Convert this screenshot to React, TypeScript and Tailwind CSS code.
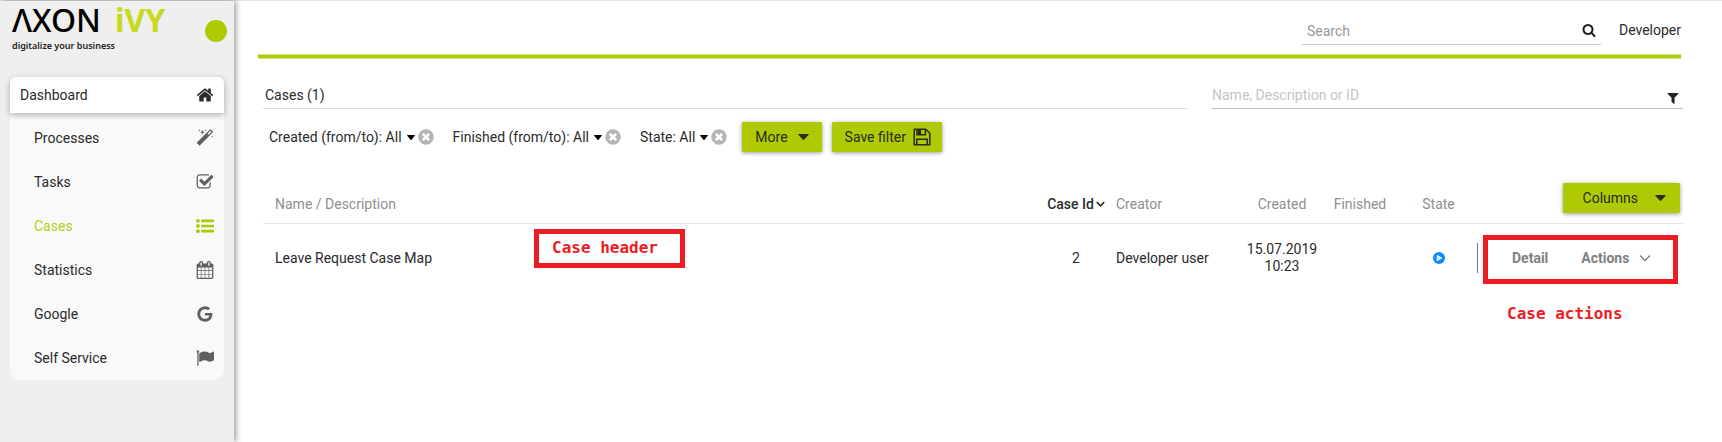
import React from "react";

type IconProps = { d: string; className?: string };

const Glyph = ({ d, className = "size-[18px]" }: IconProps) => (
  <svg viewBox="0 0 1792 1792" fill="currentColor" aria-hidden="true" className={className}>
    <path d={d} />
  </svg>
);

const HOME =
  "M1472 992v480q0 26-19 45t-45 19h-384v-384h-256v384h-384q-26 0-45-19t-19-45v-480q0-1 .5-3t.5-3l575-474 575 474q1 2 1 6zm223-69l-62 74q-8 9-21 11h-3q-13 0-21-7l-692-577-692 577q-12 8-24 7-13-2-21-11l-62-74q-8-10-7-23.5t11-21.5l719-599q32-26 76-26t76 26l244 204v-195q0-14 9-23t23-9h192q14 0 23 9t9 23v408l219 182q10 8 11 21.5t-7 23.5z";
const MAGIC =
  "M1254 581l293-293-107-107-293 293zm447-293q0 27-18 45l-1286 1286q-18 18-45 18t-45-18l-198-198q-18-18-18-45t18-45l1286-1286q18-18 45-18t45 18l198 198q18 18 18 45zm-1351-190l98 30-98 30-30 98-30-98-98-30 98-30 30-98zm350 162l196 60-196 60-60 196-60-196-196-60 196-60 60-196zm930 478l98 30-98 30-30 98-30-98-98-30 98-30 30-98zm-640-640l98 30-98 30-30 98-30-98-98-30 98-30 30-98z";
const CHECK =
  "M1472 930v318q0 119-84.5 203.5t-203.5 84.5h-832q-119 0-203.5-84.5t-84.5-203.5v-832q0-119 84.5-203.5t203.5-84.5h832q63 0 117 25 15 7 18 23 3 17-9 29l-49 49q-10 10-23 10-3 0-9-2-23-6-45-6h-832q-66 0-113 47t-47 113v832q0 66 47 113t113 47h832q66 0 113-47t47-113v-254q0-13 9-22l64-64q10-10 23-10 6 0 12 3 20 8 20 29zm231-489l-814 814q-24 24-57 24t-57-24l-430-430q-24-24-24-57t24-57l110-110q24-24 57-24t57 24l263 263 647-647q24-24 57-24t57 24l110 110q24 24 24 57t-24 57z";
const LIST =
  "M0 384a192 192 0 1 0 384 0a192 192 0 1 0-384 0zM0 896a192 192 0 1 0 384 0a192 192 0 1 0-384 0zM0 1408a192 192 0 1 0 384 0a192 192 0 1 0-384 0zM544 256h1216q32 0 32 32v192q0 32-32 32h-1216q-32 0-32-32v-192q0-32 32-32zM544 768h1216q32 0 32 32v192q0 32-32 32h-1216q-32 0-32-32v-192q0-32 32-32zM544 1280h1216q32 0 32 32v192q0 32-32 32h-1216q-32 0-32-32v-192q0-32 32-32z";
const CALENDAR =
  "M192 1664h288v-288h-288v288zm352 0h320v-288h-320v288zm-352-352h288v-320h-288v320zm352 0h320v-320h-320v320zm-352-384h288v-288h-288v288zm736 736h320v-288h-320v288zm-384-736h320v-288h-320v288zm768 736h288v-288h-288v288zm-384-352h320v-320h-320v320zm-352-864v-288q0-13-9.5-22.5t-22.5-9.5h-64q-13 0-22.5 9.5t-9.5 22.5v288q0 13 9.5 22.5t22.5 9.5h64q13 0 22.5-9.5t9.5-22.5zm736 864h288v-320h-288v320zm-384-384h320v-288h-320v288zm384 0h288v-288h-288v288zm32-480v-288q0-13-9.5-22.5t-22.5-9.5h-64q-13 0-22.5 9.5t-9.5 22.5v288q0 13 9.5 22.5t22.5 9.5h64q13 0 22.5-9.5t9.5-22.5zm384-64v1280q0 52-38 90t-90 38h-1408q-52 0-90-38t-38-90v-1280q0-52 38-90t90-38h128v-96q0-66 47-113t113-47h64q66 0 113 47t47 113v96h384v-96q0-66 47-113t113-47h64q66 0 113 47t47 113v96h128q52 0 90 38t38 90z";
const GOOGLE =
  "M896 786h725q12 67 12 128 0 217-91 387.5t-259.5 266.5-386.5 96q-157 0-299-60.5t-245-163.5-163.5-245-60.5-299 60.5-299 163.5-245 245-163.5 299-60.5q300 0 515 201l-209 201q-123-119-306-119-129 0-238.5 65t-173.5 176.5-64 243.5 64 243.5 173.5 176.5 238.5 65q87 0 160-24t120-60 82-82 51.5-87 22.5-78h-436v-264z";
const FLAG =
  "M320 256q0 72-64 110v1266q0 13-9.5 22.5t-22.5 9.5h-64q-13 0-22.5-9.5t-9.5-22.5v-1266q-64-38-64-110 0-53 37.5-90.5t90.5-37.5 90.5 37.5 37.5 90.5zm1472 64v763q0 25-12.5 38.5t-39.5 27.5q-215 116-369 116-61 0-123.5-22t-108.5-48-115.5-48-142.5-22q-192 0-464 146-17 9-33 9-26 0-45-19t-19-45v-742q0-32 31-55 21-14 79-43 236-120 421-120 107 0 200 29t219 88q38 19 88 19 54 0 117.5-21t110-47 88-47 54.5-21q26 0 45 19t19 45z";
const SEARCH =
  "M1216 832q0-185-131.5-316.5t-316.5-131.5-316.5 131.5-131.5 316.5 131.5 316.5 316.5 131.5 316.5-131.5 131.5-316.5zm512 832q0 52-38 90t-90 38q-54 0-90-38l-343-342q-179 124-399 124-143 0-273.5-55.5t-225-150-150-225-55.5-273.5 55.5-273.5 150-225 225-150 273.5-55.5 273.5 55.5 225 150 150 225 55.5 273.5q0 220-124 399l343 343q37 37 37 90z";
const FILTER =
  "M1595 295q17 41-14 70l-493 493v742q0 42-39 59-13 5-25 5-27 0-45-19l-256-256q-19-19-19-45v-486l-493-493q-31-29-14-70 17-39 59-39h1280q42 0 59 39z";
const TIMES =
  "M1277 1122q0-26-19-45l-181-181 181-181q19-19 19-45 0-27-19-46l-90-90q-19-19-46-19-26 0-45 19l-181 181-181-181q-19-19-45-19-27 0-46 19l-90 90q-19 19-19 46 0 26 19 45l181 181-181 181q-19 19-19 45 0 27 19 46l90 90q19 19 46 19 26 0 45-19l181-181 181 181q19 19 45 19 27 0 46-19l90-90q19-19 19-46zm387-226q0 209-103 385.5t-279.5 279.5-385.5 103-385.5-103-279.5-279.5-103-385.5 103-385.5 279.5-279.5 385.5-103 385.5 103 279.5 279.5 103 385.5z";

const Caret = ({ className }: { className: string }) => (
  <svg viewBox="0 0 12 7" preserveAspectRatio="none" fill="currentColor" aria-hidden="true" className={className}>
    <path d="M.8 0h10.4q1 0 .4.9L6.8 6.5q-.8.8-1.6 0L.4.9Q-.2 0 .8 0z" />
  </svg>
);

const Chevron = ({ className, strokeWidth }: { className: string; strokeWidth: number }) => (
  <svg viewBox="0 0 12 8" fill="none" stroke="currentColor" strokeWidth={strokeWidth} aria-hidden="true" className={className}>
    <path d="M1 1.5l5 5 5-5" />
  </svg>
);

const Floppy = () => (
  <svg viewBox="0 0 18 18" fill="none" stroke="currentColor" strokeWidth="1.5" aria-hidden="true" className="size-[18px]">
    <path d="M1.2 1.2h11.6l4 4v11.6H1.2z" strokeLinejoin="round" />
    <path d="M4 1.2v5.6h8.4V1.2" />
    <path d="M4.5 1.4h3.6v5H4.5z" fill="currentColor" stroke="none" />
    <path d="M3.8 16.6v-5.4h10.4v5.4" />
  </svg>
);

const menu = [
  { label: "Processes", icon: MAGIC },
  { label: "Tasks", icon: CHECK },
  { label: "Cases", icon: LIST, active: true },
  { label: "Statistics", icon: CALENDAR },
  { label: "Google", icon: GOOGLE },
  { label: "Self Service", icon: FLAG },
];

const filters = ["Created (from/to): All", "Finished (from/to): All", "State: All"];

const greenButton =
  "flex h-[30px] items-center rounded-[1px] bg-[#afca05] text-[#2b2b1e] shadow-[0_1px_4px_rgba(0,0,0,0.4)]";

function Sidebar() {
  return (
    <aside className="relative z-10 w-[234px] shrink-0 bg-[#efefef] px-[10px] shadow-[2px_0_6px_rgba(0,0,0,0.4)]">
      <div className="h-[76px] pl-[2px] font-['Noto_Sans']">
        <div className="flex gap-[14px] text-[32px] leading-[38px] text-black">
          <span className="font-medium">ΛXON</span>
          <span className="font-bold text-[#c8d91e]">iVY</span>
        </div>
        <div className="text-[9px] leading-[13px] font-semibold text-[#222]">digitalize your business</div>
      </div>
      <span className="absolute top-[19px] right-[7px] size-[22px] rounded-full bg-[#afca05]" />
      <nav className="rounded-[10px] bg-[#f9f9f9]">
        <a
          href="#dashboard"
          className="mb-[3px] flex h-9 items-center justify-between rounded-t-md bg-white pr-[10px] pl-[10px] text-[#2b2b2b] shadow-[0_2px_6px_rgba(0,0,0,0.3)]"
        >
          Dashboard
          <Glyph d={HOME} />
        </a>
        <ul>
          {menu.map((m) => (
            <li key={m.label}>
              <a
                href="#menu"
                className={
                  "flex h-11 items-center justify-between pr-[10px] pl-6 " +
                  (m.active ? "text-[#b5cf1c]" : "text-[#2b2b2b]")
                }
              >
                {m.label}
                <span className={m.active ? "text-[#afca05]" : "text-[#5f5f5f]"}>
                  <Glyph d={m.icon} />
                </span>
              </a>
            </li>
          ))}
        </ul>
      </nav>
    </aside>
  );
}

function Annotation({ children }: { children: string }) {
  return (
    <span className="font-['DejaVu_Sans_Mono'] text-base leading-5 font-bold whitespace-nowrap text-[#ed1c24]">
      {children}
    </span>
  );
}

function CaseTable() {
  return (
    <table className="w-full table-fixed border-collapse">
      <colgroup>
        <col />
        <col className="w-[72px]" />
        <col className="w-[132px]" />
        <col className="w-[76px]" />
        <col className="w-[80px]" />
        <col className="w-[77px]" />
        <col className="w-[206px]" />
      </colgroup>
      <thead>
        <tr className="h-[53px] border-b border-[#e6e6e6] text-[#8f8f8f] *:pt-[15px] *:font-normal">
          <th className="pl-3 text-left">Name / Description</th>
          <th className="whitespace-nowrap text-[#2b2b2b]">
            <button type="button" className="inline-flex items-center gap-[2px] font-medium">
              Case Id
              <Chevron className="h-[6px] w-[9px]" strokeWidth={2} />
            </button>
          </th>
          <th className="pl-1 text-left">Creator</th>
          <th>Created</th>
          <th>Finished</th>
          <th>State</th>
          <th className="!pt-[13px] pr-[3px] pb-[9px]">
            <button type="button" className={greenButton + " ml-auto gap-[17px] pr-[14px] pl-5"}>
              Columns
              <Caret className="h-[6px] w-[11px]" />
            </button>
          </th>
        </tr>
      </thead>
      <tbody>
        <tr className="h-[69px] text-center text-[#2b2b2b]">
          <td className="relative pl-3 text-left">
            Leave Request Case Map
            <div className="absolute top-[5px] left-[271px] flex h-[39px] w-[151px] items-center border-[5px] border-[#ed1c24] pl-[13px]">
              <Annotation>Case header</Annotation>
            </div>
          </td>
          <td>2</td>
          <td className="pl-1 text-left">Developer user</td>
          <td className="leading-[17px]">
            15.07.2019
            <br />
            10:23
          </td>
          <td />
          <td>
            <svg viewBox="0 0 12 12" role="img" aria-label="Running" className="mx-auto size-3">
              <circle cx="6" cy="6" r="6" fill="#0d8bff" />
              <path d="M4.2 3.4L8.8 6L4.2 8.6z" fill="#fff" stroke="#fff" strokeWidth=".9" strokeLinejoin="round" />
              <path d="M5.2 5.3L6.4 6L5.2 6.7z" fill="#0d8bff" />
            </svg>
          </td>
          <td className="relative">
            <div className="flex h-[30px] items-center border-l border-[#777] pl-[34px] text-[#808080]">
              <button type="button" className="font-bold">Detail</button>
              <button type="button" className="ml-[33px] flex items-center gap-[10px] font-bold">
                Actions
                <Chevron className="h-2 w-3" strokeWidth={1.4} />
              </button>
            </div>
            <div className="pointer-events-none absolute top-[11px] left-[6px] h-[49px] w-[195px] border-[5px] border-[#ed1c24]" />
            <div className="absolute top-20 left-[30px] flex">
              <Annotation>Case actions</Annotation>
            </div>
          </td>
        </tr>
      </tbody>
    </table>
  );
}

export default function App() {
  return (
    <div className="flex min-h-screen border-t border-[#e4e4e4] bg-white font-[Roboto,sans-serif] text-sm leading-5">
      <Sidebar />
      <main className="min-w-0 flex-1 pr-[39px] pl-6">
        <header className="mr-[2px] flex h-[53px] items-start justify-end gap-[18px] pt-[19px]">
          <div className="flex h-[25px] w-[299px] items-start border-b border-[#c8c8c8] px-[5px]">
            <input
              aria-label="Search"
              placeholder="Search"
              className="min-w-0 flex-1 pt-px leading-5 outline-none placeholder:text-[#999]"
            />
            <button type="button" aria-label="Run search" className="pt-[3px] text-[#222]">
              <Glyph d={SEARCH} className="size-[14px]" />
            </button>
          </div>
          <a href="#user" className="text-[#2b2b2b]">Developer</a>
        </header>
        <div className="mr-[2px] h-[5px] border-y border-[#d7e482] bg-[#afca05]" />

        <section className="pl-[5px]">
          <div className="flex gap-[25px] pt-[26px]">
            <h1 className="h-6 flex-1 border-b border-[#e0e0e0] pl-[2px] text-[#2b2b2b]">Cases (1)</h1>
            <div className="flex h-6 w-[471px] items-start border-b border-[#bdbdbd] pr-[3px]">
              <input
                aria-label="Name, Description or ID"
                placeholder="Name, Description or ID"
                className="min-w-0 flex-1 leading-5 outline-none placeholder:text-[#c4c4c4]"
              />
              <button type="button" aria-label="Filter" className="pt-[6px] text-[#222]">
                <Glyph d={FILTER} className="size-[14px]" />
              </button>
            </div>
          </div>

          <div className="flex items-center pt-[13px] pl-[6px] text-[#2b2b2b]">
            {filters.map((f, i) => (
              <div key={f} className={"flex items-center " + (i < 2 ? "mr-[18px]" : "mr-[14px]")}>
                <button type="button" className="flex items-center gap-[5px]">
                  {f}
                  <Caret className="h-[5px] w-2 text-black" />
                </button>
                <button type="button" aria-label={"Remove " + f} className="ml-[2px] text-[#b5b5b5]">
                  <Glyph d={TIMES} />
                </button>
              </div>
            ))}
            <button type="button" className={greenButton + " mr-[10px] gap-[10px] px-[13px]"}>
              More
              <Caret className="h-[6px] w-[11px]" />
            </button>
            <button type="button" className={greenButton + " gap-[7px] pr-[11px] pl-[13px]"}>
              Save filter
              <Floppy />
            </button>
          </div>

          <div className="pt-[18px]">
            <CaseTable />
          </div>
        </section>
      </main>
    </div>
  );
}
